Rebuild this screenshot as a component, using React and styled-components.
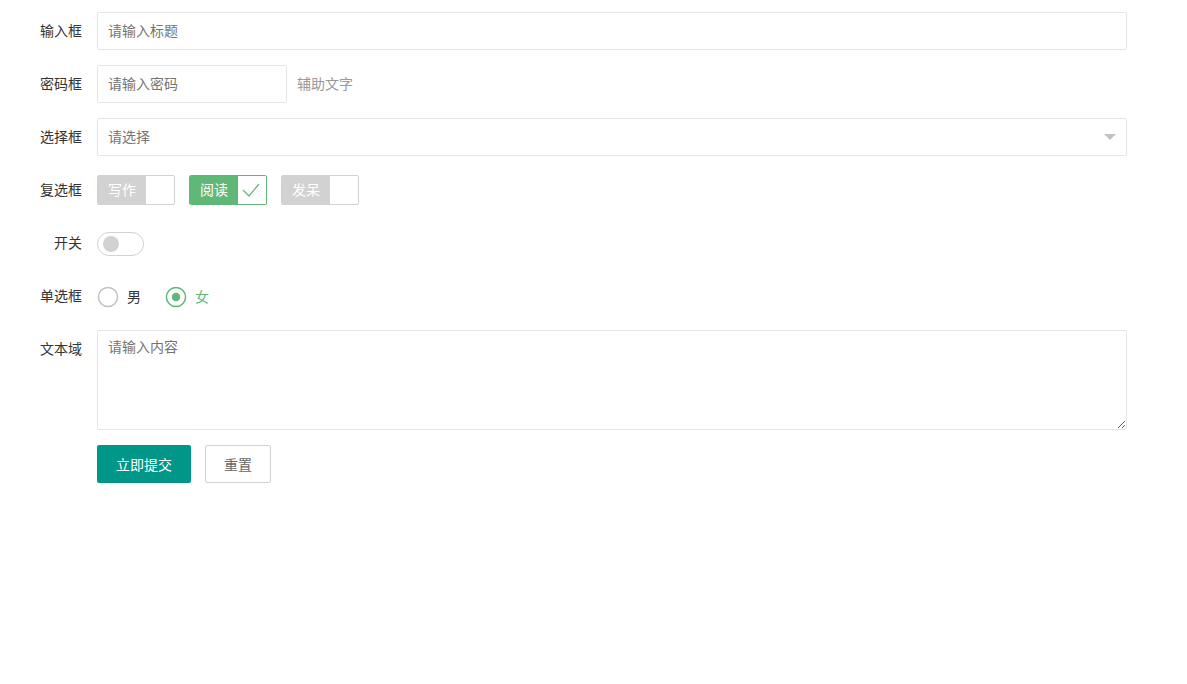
import React from "react";
import styled, { createGlobalStyle } from "styled-components";

const Global = createGlobalStyle`
  html, body { margin: 0; padding: 0; background: #fff; }
  body {
    font-family: "Helvetica Neue", "Noto Sans CJK SC", "Liberation Sans", sans-serif;
    font-size: 14px;
    color: #333;
  }
  * { box-sizing: border-box; }
  input::placeholder, textarea::placeholder { color: #757575; }
`;

const Form = styled.form`
  padding: 12px 60px 0 0;
  display: flex;
  flex-direction: column;
  gap: 15px;
`;

const Item = styled.div`
  display: flex;
  align-items: flex-start;
  min-height: 38px;
`;

const Label = styled.label`
  width: 97px;
  flex: none;
  padding: 8px 15px 10px 0;
  line-height: 20px;
  text-align: right;
  color: #333;
`;

const Block = styled.div`
  flex: 1;
  display: flex;
  align-items: flex-start;
  position: relative;
`;

const Input = styled.input`
  height: 38px;
  width: ${(p) => p.$w || "100%"};
  border: 1px solid #e6e6e6;
  border-radius: 2px;
  padding: 0 10px 2px;
  font: inherit;
  color: #333;
  outline: none;
  background: #fff;
`;

const Aux = styled.div`
  padding: 8px 0 10px;
  margin-left: 10px;
  line-height: 20px;
  color: #999;
`;

const Select = styled.div`
  width: 100%;
  height: 38px;
  border: 1px solid #e6e6e6;
  border-radius: 2px;
  padding: 0 30px 2px 10px;
  line-height: 34px;
  color: #757575;
  position: relative;
`;

const Arrow = styled.i`
  position: absolute;
  right: 10px;
  top: 50%;
  margin-top: -3px;
  width: 0;
  height: 0;
  border-style: solid;
  border-width: 6px 6px 0 6px;
  border-color: #c2c2c2 transparent transparent transparent;
`;

const Checks = styled.div`
  display: flex;
  gap: 14px;
  margin-top: 4px;
`;

const Check = styled.div`
  display: flex;
  width: 78px;
  height: 30px;
  border: 1px solid ${(p) => (p.$on ? "#5FB878" : "#d2d2d2")};
  border-radius: 2px;
  overflow: hidden;
  background: #fff;
`;

const CheckText = styled.span`
  width: 48px;
  flex: none;
  padding: 0 0 2px;
  text-align: center;
  line-height: 26px;
  background: ${(p) => (p.$on ? "#5FB878" : "#d2d2d2")};
  color: #fff;
  white-space: nowrap;
`;

const CheckIcon = styled.span`
  width: 28px;
  height: 28px;
  display: block;
`;

const Switch = styled.div`
  margin-top: 8px;
  width: 47px;
  height: 24px;
  border: 1px solid #d2d2d2;
  border-radius: 20px;
  background: #fff;
  position: relative;
`;

const Knob = styled.i`
  position: absolute;
  left: 5px;
  top: 3px;
  width: 16px;
  height: 16px;
  border-radius: 50%;
  background: #d2d2d2;
`;

const Radios = styled.div`
  display: flex;
  gap: 4px;
  margin-top: 6px;
`;

const Radio = styled.div`
  display: flex;
  align-items: center;
  height: 28px;
  padding-right: 10px;
  margin-right: 10px;
  color: ${(p) => (p.$on ? "#5FB878" : "#333")};
`;

const RadioText = styled.span`
  line-height: 20px;
  padding-bottom: 2px;
`;

const RadioIcon = styled.svg`
  width: 22px;
  height: 22px;
  margin-right: 8px;
  flex: none;
`;

const Textarea = styled.textarea`
  width: 100%;
  height: 100px;
  min-height: 100px;
  border: 1px solid #e6e6e6;
  border-radius: 2px;
  padding: 5px 10px 6px;
  font: inherit;
  line-height: 20px;
  resize: vertical;
  outline: none;
  display: block;
`;

const Buttons = styled.div`
  display: flex;
  gap: 14px;
`;

const Btn = styled.button`
  height: 38px;
  padding: 0 18px;
  border-radius: 2px;
  font: inherit;
  line-height: 36px;
  cursor: pointer;
  border: 1px solid ${(p) => (p.$primary ? "transparent" : "#d2d2d2")};
  background: ${(p) => (p.$primary ? "#009688" : "#fff")};
  color: ${(p) => (p.$primary ? "#fff" : "#666")};
`;

function CheckBox({ label, on }) {
  return (
    <Check $on={on}>
      <CheckText $on={on}>{label}</CheckText>
      <CheckIcon>
        {on && (
          <svg width="28" height="28" viewBox="0 0 28 28">
            <polyline points="5,14 11,20 21,8" fill="none" stroke="#5FB878" strokeWidth="1.2" />
          </svg>
        )}
      </CheckIcon>
    </Check>
  );
}

function RadioItem({ label, on }) {
  return (
    <Radio $on={on}>
      <RadioIcon viewBox="0 0 22 22">
        <circle cx="11" cy="11" r="9.6" fill="none" stroke={on ? "#5FB878" : "#c2c2c2"} strokeWidth="1.5" />
        {on && <circle cx="11" cy="11" r="4.2" fill="#5FB878" />}
      </RadioIcon>
      <RadioText>{label}</RadioText>
    </Radio>
  );
}

export default function App() {
  return (
    <>
      <Global />
      <Form onSubmit={(e) => e.preventDefault()}>
        <Item>
          <Label>输入框</Label>
          <Block>
            <Input placeholder="请输入标题" />
          </Block>
        </Item>
        <Item>
          <Label>密码框</Label>
          <Block>
            <Input type="password" placeholder="请输入密码" $w="190px" />
            <Aux>辅助文字</Aux>
          </Block>
        </Item>
        <Item>
          <Label>选择框</Label>
          <Block>
            <Select>
              请选择
              <Arrow />
            </Select>
          </Block>
        </Item>
        <Item>
          <Label>复选框</Label>
          <Block>
            <Checks>
              <CheckBox label="写作" />
              <CheckBox label="阅读" on />
              <CheckBox label="发呆" />
            </Checks>
          </Block>
        </Item>
        <Item>
          <Label>开关</Label>
          <Block>
            <Switch>
              <Knob />
            </Switch>
          </Block>
        </Item>
        <Item>
          <Label>单选框</Label>
          <Block>
            <Radios>
              <RadioItem label="男" />
              <RadioItem label="女" on />
            </Radios>
          </Block>
        </Item>
        <Item>
          <Label>文本域</Label>
          <Block>
            <Textarea placeholder="请输入内容" />
          </Block>
        </Item>
        <Item>
          <Label />
          <Block>
            <Buttons>
              <Btn $primary type="button">立即提交</Btn>
              <Btn type="button">重置</Btn>
            </Buttons>
          </Block>
        </Item>
      </Form>
    </>
  );
}
